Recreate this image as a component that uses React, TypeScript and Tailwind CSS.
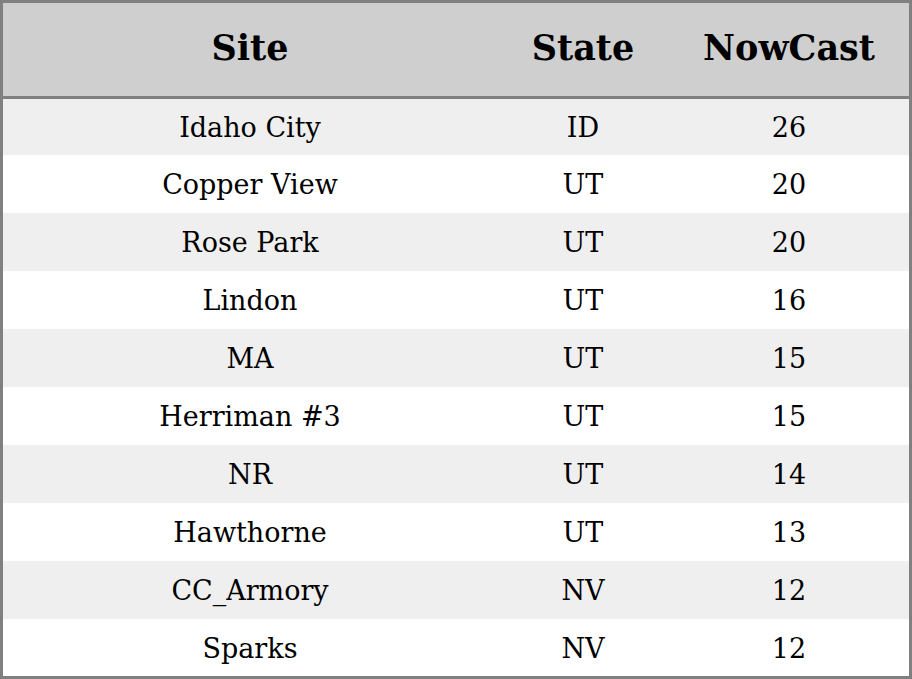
import React from "react";

const rows: [string, string, string][] = [
  ["Idaho City", "ID", "26"],
  ["Copper View", "UT", "20"],
  ["Rose Park", "UT", "20"],
  ["Lindon", "UT", "16"],
  ["MA", "UT", "15"],
  ["Herriman #3", "UT", "15"],
  ["NR", "UT", "14"],
  ["Hawthorne", "UT", "13"],
  ["CC_Armory", "NV", "12"],
  ["Sparks", "NV", "12"],
];

const heights = ["h-[56px]", "h-[58px]", "h-[58px]", "h-[58px]", "h-[58px]", "h-[58px]", "h-[58px]", "h-[58px]", "h-[58px]", "h-[57px]"];

export default function App() {
  return (
    <div className="w-[912px] h-[679px] border-[3px] border-[#808080] bg-white flex flex-col text-black" style={{ fontFamily: '"DejaVu Serif", serif' }}>
      <div className="h-[96px] bg-[#cfcfcf] border-b-[3px] border-[#808080] grid grid-cols-[494px_172px_240px] items-center text-[35px] font-bold shrink-0 pb-[3px]">
        <div className="text-center">Site</div>
        <div className="text-center">State</div>
        <div className="text-center">NowCast</div>
      </div>
      {rows.map((r, i) => (
        <div
          key={i}
          className={`${heights[i]} ${i % 2 === 0 ? "bg-[#efefef]" : "bg-white"} grid grid-cols-[494px_172px_240px] items-center text-[27px] shrink-0 pt-[3px]`}
        >
          <div className="text-center">{r[0]}</div>
          <div className="text-center">{r[1]}</div>
          <div className="text-center">{r[2]}</div>
        </div>
      ))}
    </div>
  );
}
